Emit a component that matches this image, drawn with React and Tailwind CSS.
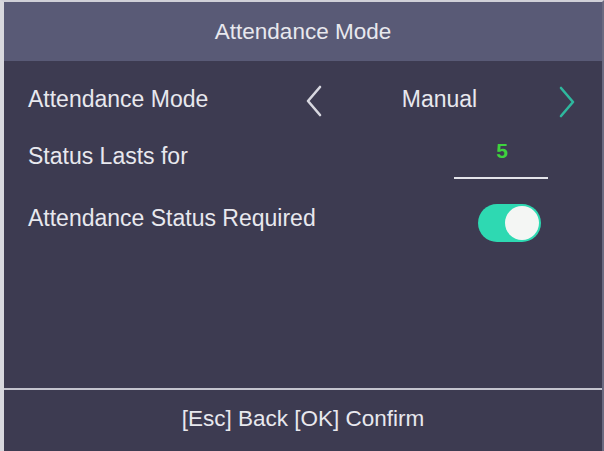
import React from "react";

function Chevron({ dir, className }) {
  return (
    <svg width="18" height="32" viewBox="0 0 18 32" className={className} fill="none">
      {dir === "left" ? (
        <path d="M15 2 L3 16 L15 30" stroke="currentColor" strokeWidth="2.6" strokeLinecap="round" strokeLinejoin="round" />
      ) : (
        <path d="M3 2 L15 16 L3 30" stroke="currentColor" strokeWidth="2.6" strokeLinecap="round" strokeLinejoin="round" />
      )}
    </svg>
  );
}

export default function App() {
  return (
    <div
      className="w-[604px] h-[451px] flex flex-col bg-[#3d3b51] border-l-[4px] border-t-[2px] border-r-[2px] border-l-[#d8d8de] border-t-[#d0d0d8] border-r-[#6a6a80] text-[#e8e8ee] overflow-hidden"
      style={{ fontFamily: '"Liberation Sans", Arial, sans-serif' }}
    >
      <div className="h-[59px] bg-[#595a76] flex items-center justify-center text-[22.5px] shrink-0">
        Attendance Mode
      </div>
      <div className="flex-1 flex flex-col pl-[24px] text-[23px]">
        <div className="h-[42px] mt-[17px] flex items-center">
          <span className="w-[277px]">Attendance Mode</span>
          <Chevron dir="left" className="text-[#d8d8e0] mt-[4px]" />
          <span className="w-[235px] text-center pr-[2px]">Manual</span>
          <Chevron dir="right" className="text-[#2fb89e] mt-[6px]" />
        </div>
        <div className="h-[46px] flex items-center mt-[13px]">
          <span className="w-[426px]">Status Lasts for</span>
          <div className="w-[94px] h-[46px] flex flex-col items-center justify-end">
            <span className="text-[#3ed23e] text-[21px] font-semibold leading-none mb-[16px] mr-[-2px]">5</span>
            <div className="w-[94px] h-[2px] bg-[#e4e4ea]" />
          </div>
        </div>
        <div className="h-[50px] flex items-center mt-[14px]">
          <span className="w-[450px]">Attendance Status Required</span>
          <div className="w-[63px] h-[38px] rounded-full bg-[#2ed9b2] flex items-center justify-end pr-[2px] mt-[9px]">
            <div className="w-[34px] h-[34px] rounded-full bg-[#f4f6f4]" />
          </div>
        </div>
      </div>
      <div className="h-[2px] bg-[#c4c4ce] shrink-0" />
      <div className="h-[61px] flex items-center justify-center text-[22.5px] shrink-0 pb-[4px]">
        [Esc] Back [OK] Confirm
      </div>
    </div>
  );
}
